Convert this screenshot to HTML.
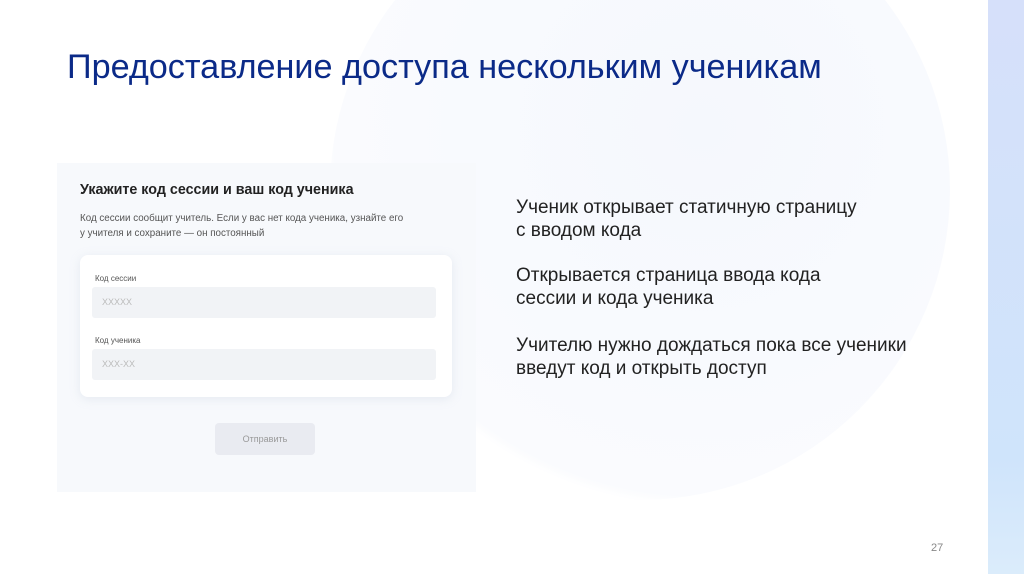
<!DOCTYPE html>
<html><head><meta charset="utf-8"><style>
body{margin:0;width:1024px;height:574px;overflow:hidden;background:#fff;font-family:"Liberation Sans",sans-serif;position:relative}
.a{position:absolute}
.blob{left:330px;top:-120px;width:620px;height:620px;border-radius:50%;background:radial-gradient(circle at 60% 40%,#f5f8fd,#fafbfe 70%,#fff 72%)}
.strip{left:988px;top:0;width:36px;height:574px;background:linear-gradient(#d6e0fa,#cfe4fb 80%,#dbecfb)}
h1{position:absolute;left:67px;top:48px;margin:0;font-weight:normal;font-size:34.2px;color:#0b2a88;white-space:nowrap}
.txt{left:516px;font-size:19px;line-height:22.5px;color:#222;white-space:nowrap}
.panel{left:57px;top:163px;width:419px;height:329px;background:#f7f9fc}
.card{left:80px;top:255px;width:372px;height:142px;background:#fff;border-radius:8px;box-shadow:0 2px 10px rgba(180,190,210,.25)}
.inp{left:92px;width:344px;height:31px;background:#f1f3f6;border-radius:3px;font-size:9px;color:#bbb;line-height:31px;text-indent:10px}
.lbl{left:95px;font-size:8px;color:#555}
</style></head><body>
<div class="a blob"></div>
<div class="a strip"></div>
<h1>Предоставление доступа нескольким ученикам</h1>
<div class="a panel"></div>
<div class="a" style="left:80px;top:182px;font-size:14.3px;font-weight:bold;color:#222">Укажите код сессии и ваш код ученика</div>
<div class="a" style="left:80px;top:211px;font-size:9.8px;line-height:15px;color:#555">Код сессии сообщит учитель. Если у вас нет кода ученика, узнайте его<br>у учителя и сохраните — он постоянный</div>
<div class="a card"></div>
<div class="a lbl" style="top:274px">Код сессии</div>
<div class="a inp" style="top:287px">XXXXX</div>
<div class="a lbl" style="top:336px">Код ученика</div>
<div class="a inp" style="top:349px">XXX-XX</div>
<div class="a" style="left:215px;top:423px;width:100px;height:32px;background:#e9ebf1;border-radius:4px;font-size:9px;color:#999;text-align:center;line-height:32px">Отправить</div>
<div class="a txt" style="top:197px">Ученик открывает статичную страницу<br>с вводом кода</div>
<div class="a txt" style="top:265px">Открывается страница ввода кода<br>сессии и кода ученика</div>
<div class="a txt" style="top:335px">Учителю нужно дождаться пока все ученики<br>введут код и открыть доступ</div>
<div class="a" style="left:931px;top:542px;font-size:11px;color:#888">27</div>
</body></html>
